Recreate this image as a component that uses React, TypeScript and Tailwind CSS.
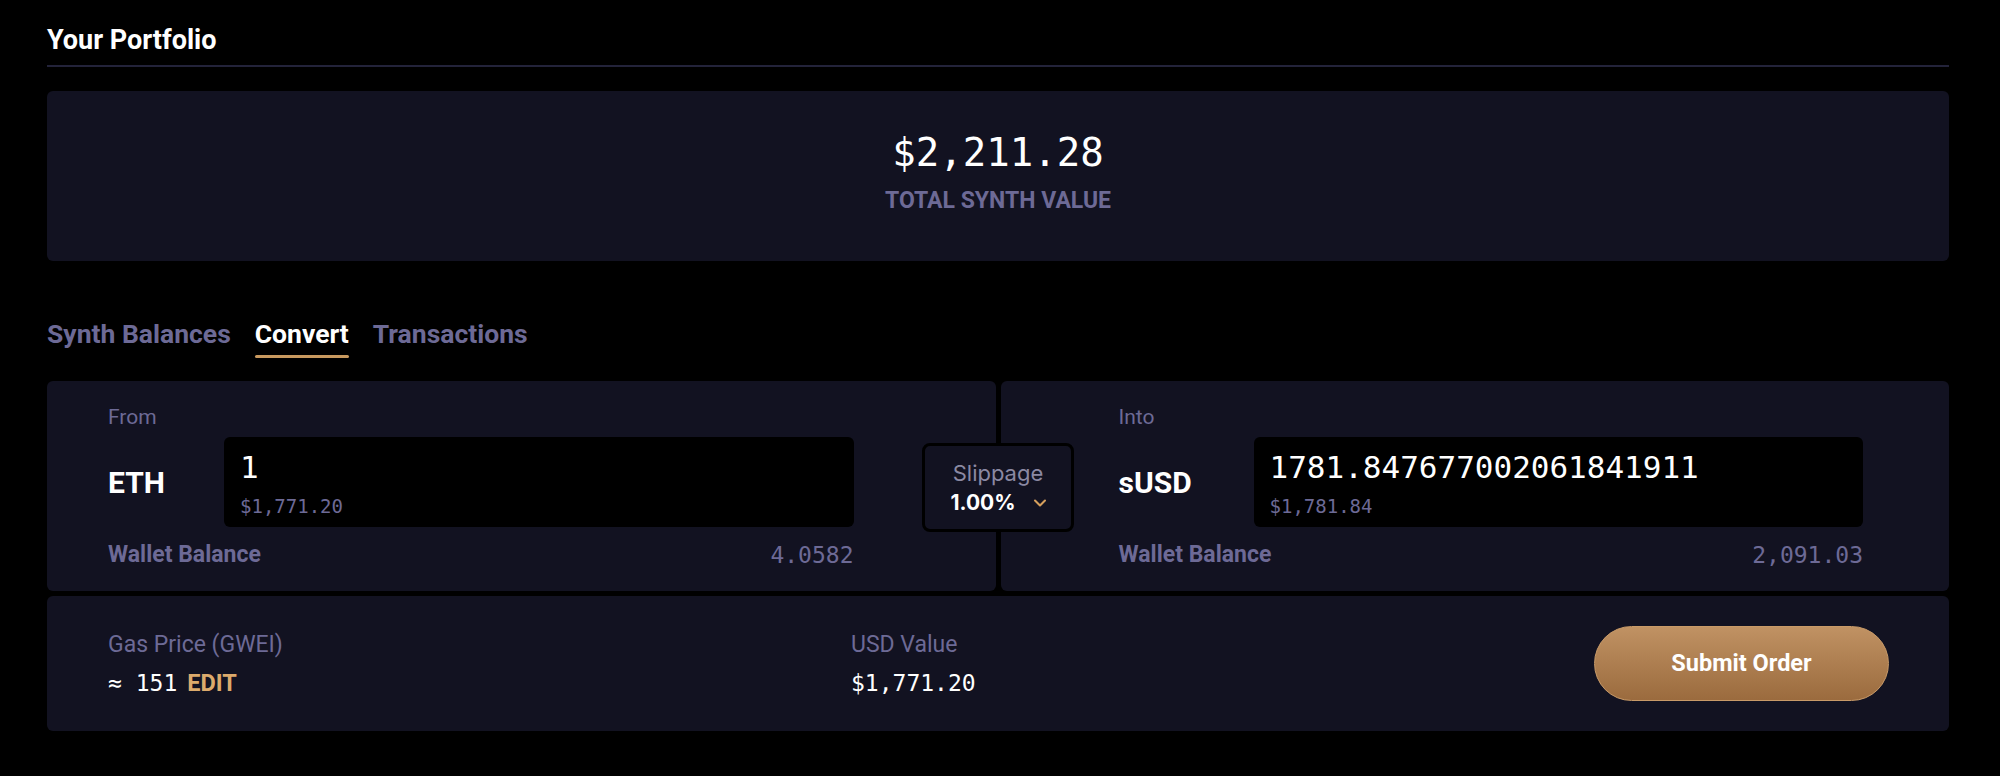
import { ChevronDown } from "lucide-react";

const sans = "font-['Liberation_Sans_Narrow',Roboto,sans-serif]";
const mono = "font-['DejaVu_Sans_Mono',monospace]";

type SideProps = {
  label: string;
  symbol: string;
  amount: string;
  usd: string;
  balance: string;
  side: "from" | "into";
};

function ConvertSide({ label, symbol, amount, usd, balance, side }: SideProps) {
  const pad = side === "from" ? "pl-[61px] pr-[142px]" : "pl-[118px] pr-[86px]";
  const symW = side === "from" ? "w-[116px]" : "w-[135px]";
  return (
    <div className={`min-w-0 rounded-md bg-[#121221] pt-[22px] pb-[22px] ${pad}`}>
      <div className={`${sans} text-[21px] leading-[28px] text-[#6d6a96]`}>{label}</div>
      <div className="mt-[6px] flex items-center">
        <div className={`${symW} shrink-0 ${sans} text-[30px] font-bold text-white`}>{symbol}</div>
        <div className="h-[90px] flex-1 rounded-md bg-black pl-[16px] pt-[11px]">
          <div className={`${mono} text-[31px] leading-[38px] text-white`}>{amount}</div>
          <div className={`${mono} mt-[8px] text-[19px] leading-[24px] text-[#6d6a96]`}>{usd}</div>
        </div>
      </div>
      <div className="mt-[14px] flex items-center justify-between">
        <span className={`${sans} text-[23px] font-bold leading-[28px] text-[#6d6a96]`}>Wallet Balance</span>
        <span className={`${mono} text-[23px] leading-[28px] text-[#6d6a96]`}>{balance}</span>
      </div>
    </div>
  );
}

export default function App() {
  const tabs = ["Synth Balances", "Convert", "Transactions"];
  return (
    <div className="min-h-screen w-full bg-black pl-[47px] pr-[51px] pt-[24px]">
      <div className="border-b-2 border-[#23233a] pb-[9px]">
        <h1 className={`${sans} text-[27px] font-bold leading-[32px] text-white`}>Your Portfolio</h1>
      </div>

      <div className="mt-[24px] flex h-[170px] flex-col items-center justify-center rounded-md bg-[#121221] pb-[8px]">
        <div className={`${mono} text-[39px] leading-[46px] text-white`}>$2,211.28</div>
        <div className={`${sans} mt-[11px] text-[23px] font-bold leading-[28px] text-[#6d6a96]`}>
          TOTAL SYNTH VALUE
        </div>
      </div>

      <div className="mt-[57px] flex gap-[24px]">
        {tabs.map((t) => (
          <div key={t} className="flex flex-col">
            <span
              className={`${sans} text-[26.5px] font-bold leading-[32px] ${
                t === "Convert" ? "text-white" : "text-[#6d6a96]"
              }`}
            >
              {t}
            </span>
            <span
              className={`mt-[5px] h-[3px] rounded-sm ${t === "Convert" ? "bg-[#c8995f]" : "bg-transparent"}`}
            />
          </div>
        ))}
      </div>

      <div className="relative mt-[23px] grid h-[210px] grid-cols-2 gap-[5px]">
        <ConvertSide side="from" label="From" symbol="ETH" amount="1" usd="$1,771.20" balance="4.0582" />
        <ConvertSide
          side="into"
          label="Into"
          symbol="sUSD"
          amount="1781.847677002061841911"
          usd="$1,781.84"
          balance="2,091.03"
        />
        <button
          type="button"
          className="absolute left-[875px] top-[62px] flex h-[89px] w-[152px] flex-col items-center justify-center rounded-lg border-[3px] border-black bg-[#121221]"
        >
          <span className="font-['Inter',sans-serif] text-[22px] leading-[30px] text-[#8b89a3]">Slippage</span>
          <span className="flex items-center gap-[14px] pl-[4px]">
            <span className="font-['Inter',sans-serif] text-[21px] font-bold leading-[30px] text-white">1.00%</span>
            <ChevronDown size={20} strokeWidth={2.5} className="text-[#d59f5c]" />
          </span>
        </button>
      </div>

      <div className="mt-[5px] flex h-[135px] items-center rounded-md bg-[#121221] pl-[61px] pr-[60px]">
        <div className="w-[743px]">
          <div className={`${sans} text-[23px] leading-[28px] text-[#6d6a96]`}>Gas Price (GWEI)</div>
          <div className="mt-[10px] flex items-center gap-[10px]">
            <span className={`${mono} text-[23px] leading-[28px] text-white`}>≈ 151</span>
            <span className={`${sans} text-[23.5px] font-bold leading-[28px] text-[#dcaa6c]`}>EDIT</span>
          </div>
        </div>
        <div className="flex-1">
          <div className={`${sans} text-[23px] leading-[28px] text-[#6d6a96]`}>USD Value</div>
          <div className={`${mono} mt-[10px] text-[23px] leading-[28px] text-white`}>$1,771.20</div>
        </div>
        <button
          type="button"
          className={`h-[75px] w-[295px] rounded-full border border-[#c89a68] bg-gradient-to-b from-[#c09263] to-[#9b6b3e] ${sans} text-[23.5px] font-bold text-white`}
        >
          Submit Order
        </button>
      </div>
    </div>
  );
}
